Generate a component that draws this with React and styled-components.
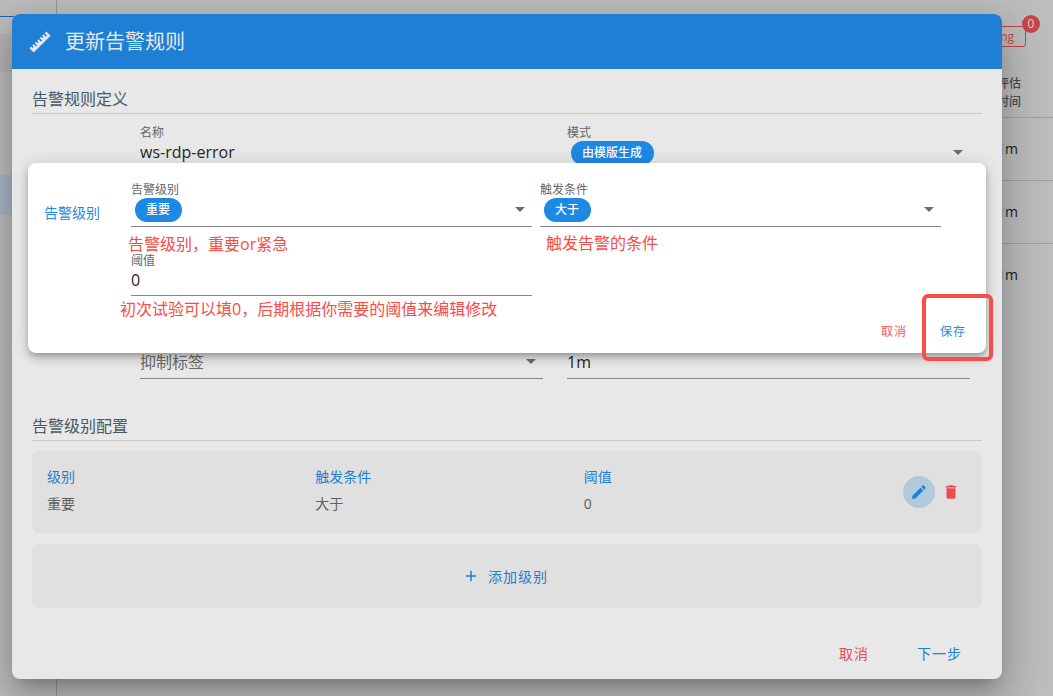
import styled, { createGlobalStyle } from 'styled-components';

const BLUE = '#1e7fd5';
const BRIGHT = '#1e88e5';
const RED = '#eb4c4c';
const NOTE = '#fa4b46';

const paths = {
    ruler: 'M1.39,18.36L3.16,16.6L4.58,18L5.64,16.95L4.22,15.54L5.64,14.12L8.11,16.6L9.17,15.54L6.7,13.06L8.11,11.65L9.53,13.06L10.59,12L9.17,10.59L10.59,9.17L13.06,11.65L14.12,10.59L11.65,8.11L13.06,6.7L14.47,8.11L15.54,7.05L14.12,5.64L15.54,4.22L18,6.7L19.07,5.64L16.6,3.16L18.36,1.39L22.61,5.64L5.64,22.61L1.39,18.36Z',
    down: 'M7,10L12,15L17,10H7Z',
    plus: 'M19,13H13V19H11V13H5V11H11V5H13V11H19V13Z',
    pencil: 'M20.71,7.04C21.1,6.65 21.1,6 20.71,5.63L18.37,3.29C18,2.9 17.35,2.9 16.96,3.29L15.12,5.12L18.87,8.87M3,17.25V21H6.75L17.81,9.93L14.06,6.18L3,17.25Z',
    trash: 'M19,4H15.5L14.5,3H9.5L8.5,4H5V6H19M6,19A2,2 0 0,0 8,21H16A2,2 0 0,0 18,19V7H6V19Z',
};

function Icon({ name, size = 24 }) {
    return (
        <svg width={size} height={size} viewBox="0 0 24 24" fill="currentColor" aria-hidden="true">
            <path d={paths[name]} />
        </svg>
    );
}

function SelectField({ id, label, value, chip, ariaLabel }) {
    return (
        <Field>
            {label && <Label htmlFor={id}>{label}</Label>}
            <Control>
                {chip ? (
                    <ChipSelect id={id} defaultValue={value}>
                        <option>{value}</option>
                    </ChipSelect>
                ) : (
                    <PlainSelect id={id} defaultValue={value} aria-label={ariaLabel}>
                        <option>{value}</option>
                    </PlainSelect>
                )}
                <Arrow><Icon name="down" /></Arrow>
            </Control>
        </Field>
    );
}

function TextField({ id, label, value, ariaLabel }) {
    return (
        <Field>
            {label && <Label htmlFor={id}>{label}</Label>}
            <Input id={id} defaultValue={value} aria-label={ariaLabel} $tall={!label} />
        </Field>
    );
}

function App() {
    const levels = [
        { name: '级别', value: '重要' },
        { name: '触发条件', value: '大于' },
        { name: '阈值', value: '0' },
    ];

    return (
        <Page>
            <GlobalStyle />

            <Sidebar>
                <SideTop />
                <SideGroup />
                <SideActive />
            </Sidebar>
            <Main>
                <Toolbar>
                    <Firing type="button">
                        Firing
                        <Badge>0</Badge>
                    </Firing>
                </Toolbar>
                <Table>
                    <thead>
                        <tr><th>评估<br />时间</th></tr>
                    </thead>
                    <tbody>
                        <tr><td>1m</td></tr>
                        <tr><td>1m</td></tr>
                        <tr><td>1m</td></tr>
                    </tbody>
                </Table>
            </Main>

            <Overlay>
                <Dialog role="dialog" aria-labelledby="dialog-title">
                    <Header>
                        <Icon name="ruler" />
                        <Title id="dialog-title">更新告警规则</Title>
                    </Header>
                    <Body>
                        <SectionTitle>告警规则定义</SectionTitle>
                        <RuleForm>
                            <TextField id="name" label="名称" value="ws-rdp-error" />
                            <SelectField id="mode" label="模式" value="由模版生成" chip />
                            <SelectField id="inhibit" value="抑制标签" ariaLabel="抑制标签" />
                            <TextField id="interval" value="1m" ariaLabel="评估时间" />
                        </RuleForm>

                        <SectionTitle>告警级别配置</SectionTitle>
                        <LevelCard>
                            {levels.map((l) => (
                                <Level key={l.name}>
                                    <dt>{l.name}</dt>
                                    <dd>{l.value}</dd>
                                </Level>
                            ))}
                            <Actions>
                                <RoundButton type="button" $color={BLUE} $active aria-label="编辑">
                                    <Icon name="pencil" size={18} />
                                </RoundButton>
                                <RoundButton type="button" $color={RED} aria-label="删除">
                                    <Icon name="trash" size={18} />
                                </RoundButton>
                            </Actions>
                        </LevelCard>
                        <AddButton type="button">
                            <Icon name="plus" size={18} />
                            添加级别
                        </AddButton>
                    </Body>
                    <Footer>
                        <TextButton type="button" $color={RED}>取消</TextButton>
                        <TextButton type="button" $color={BLUE}>下一步</TextButton>
                    </Footer>

                    <LevelDialog role="dialog" aria-label="告警级别">
                        <LevelForm>
                            <LevelTitle>告警级别</LevelTitle>
                            <LevelFields>
                                <SelectField id="severity" label="告警级别" value="重要" chip />
                                <SelectField id="condition" label="触发条件" value="大于" chip />
                                <TextField id="threshold" label="阈值" value="0" />
                            </LevelFields>
                        </LevelForm>
                        <LevelFooter>
                            <TextButton type="button" $small $color="#ff5252">取消</TextButton>
                            <TextButton type="button" $small $color={BRIGHT}>保存</TextButton>
                        </LevelFooter>
                        <Note $left={100} $top={69}>告警级别，重要or紧急</Note>
                        <Note $left={518} $top={68}>触发告警的条件</Note>
                        <Note $left={92} $top={134}>初次试验可以填0，后期根据你需要的阈值来编辑修改</Note>
                        <Marker />
                    </LevelDialog>
                </Dialog>
            </Overlay>
        </Page>
    );
}

const GlobalStyle = createGlobalStyle`
    * {
        box-sizing: border-box;
    }

    body {
        margin: 0;
        font-family: "Open Sans", "Noto Sans CJK SC", sans-serif;
        font-size: 16px;
        background-color: #bdbdbd;
    }

    h1, h2, h3, dl, dd {
        margin: 0;
        font-weight: 400;
    }

    button, input, select {
        font: inherit;
        margin: 0;
        border: none;
        outline: none;
        background: none;
    }

    button {
        cursor: pointer;
    }

    svg {
        display: block;
        flex: none;
    }
`;

const Page = styled.div`
    position: relative;
    display: flex;
    min-height: 100vh;
    overflow: hidden;
`;

const Sidebar = styled.div`
    width: 57px;
    border-right: 1px solid #999999;
`;

const SideTop = styled.div`
    height: 17px;
    border-bottom: 1px solid #1565b0;
`;

const SideGroup = styled.div`
    height: 38px;
    margin-top: 17px;
    background-color: #b4b4b4;
`;

const SideActive = styled.div`
    height: 40px;
    margin-top: 103px;
    background-color: #aab6c4;
`;

const Main = styled.div`
    flex: 1;
    min-width: 0;
`;

const Toolbar = styled.div`
    display: flex;
    justify-content: flex-end;
    padding: 26px 27px 0 0;
`;

const Firing = styled.button`
    position: relative;
    height: 21px;
    padding: 0 11px;
    border: 1px solid #cb4646;
    border-radius: 3px;
    color: #cb4646;
    font-size: 12px;
    line-height: 18px;
`;

const Badge = styled.span`
    position: absolute;
    top: -12px;
    right: -15px;
    width: 18px;
    height: 18px;
    border-radius: 9px;
    background-color: #c94545;
    color: #d8d8d8;
    font-size: 12px;
    line-height: 18px;
    text-align: center;
`;

const Table = styled.table`
    width: 100%;
    margin-top: 20px;
    border-collapse: collapse;

    th, td {
        padding: 0 32px 0 0;
        text-align: right;
        border-bottom: 1px solid #a0a0a0;
    }

    th {
        height: 50px;
        padding-top: 3px;
        color: #4c4c4c;
        font-size: 12px;
        line-height: 18px;
        font-weight: 500;
    }

    td {
        height: 63px;
        padding-right: 35px;
        color: #1c1c1c;
        font-size: 14px;
    }

    tr:last-child td {
        border-bottom: none;
    }
`;

const Overlay = styled.div`
    position: absolute;
    inset: 0;
    padding: 14px 51px 17px 12px;
`;

const Dialog = styled.div`
    position: relative;
    border-radius: 8px;
    background-color: #e8e8e8;
    box-shadow: 0 11px 15px -7px rgba(0, 0, 0, 0.2), 0 24px 38px 3px rgba(0, 0, 0, 0.14), 0 9px 46px 8px rgba(0, 0, 0, 0.12);
`;

const Header = styled.div`
    display: flex;
    align-items: center;
    gap: 13px;
    height: 55px;
    padding: 0 16px;
    border-radius: 8px 8px 0 0;
    background-color: ${BLUE};
    color: #e8e8e8;
`;

const Title = styled.h1`
    font-size: 20px;
    line-height: 32px;
`;

const Body = styled.div`
    padding: 18px 20px 0;
`;

const SectionTitle = styled.h2`
    padding-bottom: 2px;
    border-bottom: 1px solid #c9c9c9;
    color: #455a64;
    font-size: 16px;
    line-height: 24px;
`;

const RuleForm = styled.div`
    display: grid;
    grid-template-columns: 1fr 1fr;
    gap: 179px 24px;
    padding: 10px 12px 35px 108px;
`;

const Field = styled.div`
    display: flex;
    flex-direction: column;
    min-width: 0;
`;

const Label = styled.label`
    height: 16px;
    color: #666666;
    font-size: 12px;
    line-height: 18px;
`;

const Control = styled.div`
    display: flex;
    justify-content: space-between;
    height: 30px;
    border-bottom: 1px solid #878787;
`;

const Arrow = styled.span`
    color: #6c6c6c;
`;

const ChipSelect = styled.select`
    appearance: none;
    height: 24px;
    margin: 1px 0 0 4px;
    padding: 0 11px;
    border-radius: 12px;
    background-color: ${BRIGHT};
    color: #ffffff;
    font-size: 12px;
    font-weight: 500;
    line-height: 24px;
`;

const PlainSelect = styled.select`
    appearance: none;
    flex: 1;
    height: 26px;
    padding: 0;
    color: #6a6a6a;
    font-size: 16px;
    line-height: 24px;
`;

const Input = styled.input`
    width: 100%;
    height: ${(p) => (p.$tall ? '30px' : '28px')};
    padding: 0 0 3px;
    border-bottom: 1px solid #878787;
    color: #262626;
`;

const LevelCard = styled.dl`
    display: grid;
    grid-template-columns: 7fr 7fr 7fr 3fr;
    height: 82px;
    margin: 10px 0 11px;
    padding: 16px 15px;
    border-radius: 8px;
    background-color: #e0e0e0;
`;

const Level = styled.div`
    font-size: 14px;
    line-height: 20px;

    dt {
        color: ${BLUE};
    }

    dd {
        margin-top: 7px;
        color: #5e5e5e;
    }
`;

const Actions = styled.div`
    display: flex;
    align-items: center;
    justify-content: flex-end;
`;

const RoundButton = styled.button`
    display: flex;
    align-items: center;
    justify-content: center;
    width: 32px;
    height: 32px;
    padding: 0;
    border-radius: 16px;
    color: ${(p) => p.$color};
    background-color: ${(p) => (p.$active ? '#b1c9dd' : 'transparent')};
`;

const AddButton = styled.button`
    display: flex;
    align-items: center;
    justify-content: center;
    gap: 8px;
    width: 100%;
    height: 64px;
    padding: 0 8px 0 4px;
    border-radius: 8px;
    background-color: #e0e0e0;
    color: ${BLUE};
    font-size: 14px;
    letter-spacing: 1px;
`;

const Footer = styled.div`
    display: flex;
    justify-content: flex-end;
    gap: 16px;
    padding: 27px 24px 8px;
`;

const TextButton = styled.button`
    height: ${(p) => (p.$small ? '28px' : '36px')};
    padding: ${(p) => (p.$small ? '0 12px' : '0 16px')};
    color: ${(p) => p.$color};
    font-size: ${(p) => (p.$small ? '12px' : '14px')};
    letter-spacing: 1px;
`;

const LevelDialog = styled.div`
    position: absolute;
    top: 149px;
    left: 16px;
    right: 16px;
    border-radius: 8px;
    background-color: #ffffff;
    box-shadow: 0 3px 5px -1px rgba(0, 0, 0, 0.2), 0 6px 10px rgba(0, 0, 0, 0.14), 0 1px 18px rgba(0, 0, 0, 0.12);
`;

const LevelForm = styled.div`
    display: flex;
    padding: 18px 45px 0 16px;
`;

const LevelTitle = styled.h3`
    width: 87px;
    padding-top: 22px;
    color: ${BRIGHT};
    font-size: 14px;
    line-height: 20px;
`;

const LevelFields = styled.div`
    flex: 1;
    display: grid;
    grid-template-columns: 1fr 1fr;
    gap: 25px 8px;
`;

const LevelFooter = styled.div`
    display: flex;
    justify-content: flex-end;
    gap: 9px;
    padding: 21px 8px 8px;
`;

const Note = styled.span`
    position: absolute;
    left: ${(p) => p.$left}px;
    top: ${(p) => p.$top}px;
    color: ${NOTE};
    font-size: 16px;
    line-height: 24px;
    white-space: nowrap;
`;

// red frame around the save button
const Marker = styled.div`
    position: absolute;
    right: -7px;
    bottom: -8px;
    width: 71px;
    height: 67px;
    border: 4px solid ${NOTE};
    border-radius: 6px;
    pointer-events: none;
`;

export default App
